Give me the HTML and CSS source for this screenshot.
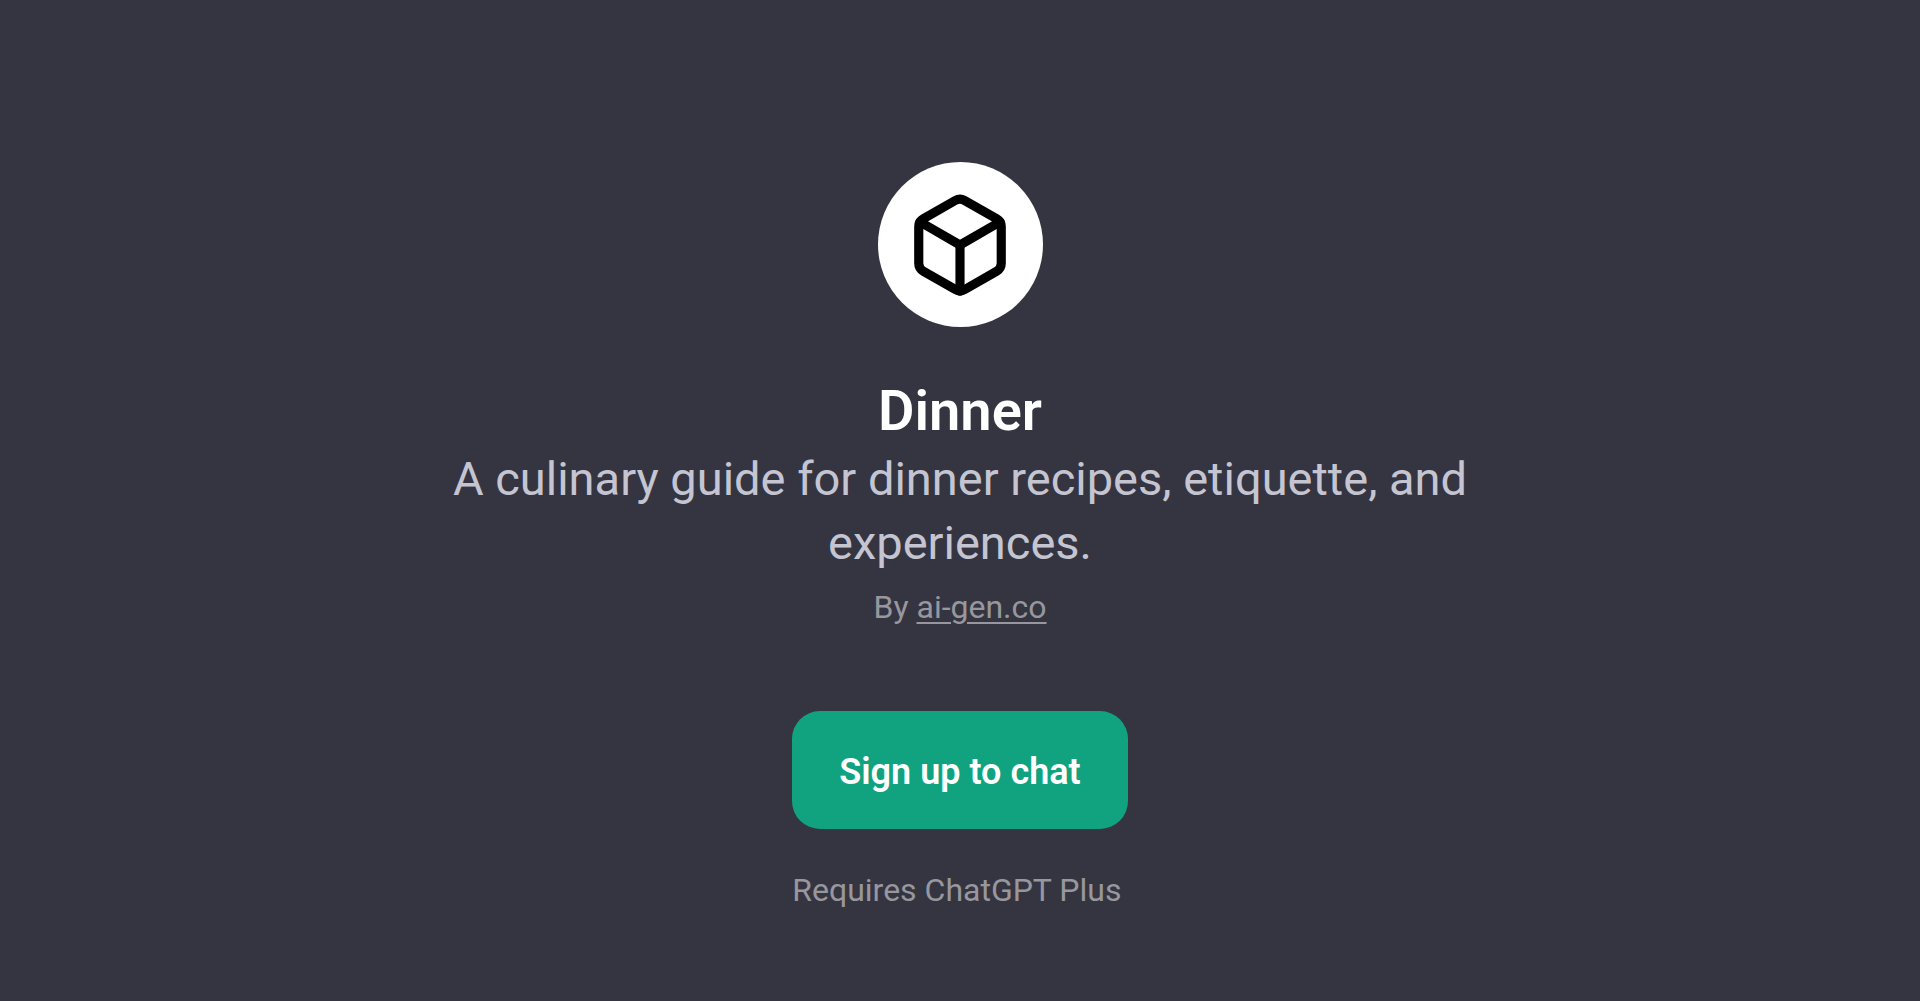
FILE: index.html
```html
<!DOCTYPE html>
<html lang="en">
<head>
    <meta charset="UTF-8">
    <meta name="viewport" content="width=device-width, initial-scale=1.0">
    <title>Dinner</title>
    <link rel="stylesheet" href="styles.css">
</head>
<body>
    <main class="gpt-card">
        <div class="gpt-logo">
            <svg viewBox="0 0 24 24" fill="none" stroke="currentColor" stroke-width="2" stroke-linecap="round" stroke-linejoin="round" aria-hidden="true">
                <path d="M21 16V8a2 2 0 0 0-1-1.73l-7-4a2 2 0 0 0-2 0l-7 4A2 2 0 0 0 3 8v8a2 2 0 0 0 1 1.73l7 4a2 2 0 0 0 2 0l7-4A2 2 0 0 0 21 16z"/>
                <polyline points="3.27 6.96 12 12.01 20.73 6.96"/>
                <line x1="12" y1="22.08" x2="12" y2="12"/>
            </svg>
        </div>
        <h1 class="gpt-name">Dinner</h1>
        <p class="gpt-description">A culinary guide for dinner recipes, etiquette, and experiences.</p>
        <p class="gpt-author">By <a href="#">ai-gen.co</a></p>
        <div class="signup">
            <button type="button" class="btn-signup">Sign up to chat</button>
            <p class="signup-note">Requires ChatGPT Plus</p>
        </div>
    </main>
</body>
</html>
```

FILE: styles.css
```css
:root {
    --background: #353541;
    --primary: #11a37f;
    --text-color: #ffffff;
    --text-secondary: #c5c5d2;
    --text-muted: #97979d;
}

* {
    margin: 0;
    padding: 0;
    box-sizing: border-box;
    font-family: Roboto, "Liberation Sans", Arial, sans-serif;
}

body {
    background-color: var(--background);
    color: var(--text-color);
    min-height: 100vh;
}

.gpt-card {
    display: flex;
    flex-direction: column;
    align-items: center;
    max-width: 1120px;
    margin: 0 auto;
    padding: 162px 32px 64px;
    text-align: center;
}

.gpt-logo {
    display: flex;
    justify-content: center;
    align-items: center;
    width: 165px;
    height: 165px;
    margin-bottom: 48px;
    border-radius: 50%;
    background-color: white;
    color: black;
}

.gpt-logo svg {
    width: 110px;
    height: 110px;
}

.gpt-name {
    font-size: 56px;
    font-weight: 600;
    line-height: 72px;
}

.gpt-description {
    color: var(--text-secondary);
    font-size: 47px;
    line-height: 64px;
}

.gpt-author {
    color: var(--text-muted);
    font-size: 32px;
    line-height: 48px;
    margin-top: 8px;
}

.gpt-author a {
    color: inherit;
    text-decoration-thickness: 2px;
    text-underline-offset: 4px;
}

.signup {
    display: flex;
    flex-direction: column;
    align-items: flex-start;
    margin-top: 80px;
}

.btn-signup {
    padding: 34px 47px 30px;
    border: none;
    border-radius: 28px;
    background-color: var(--primary);
    color: white;
    font-size: 36px;
    font-weight: 600;
    line-height: 54px;
    cursor: pointer;
}

.signup-note {
    margin-top: 37px;
    color: var(--text-muted);
    font-size: 32px;
    line-height: 48px;
}
```
